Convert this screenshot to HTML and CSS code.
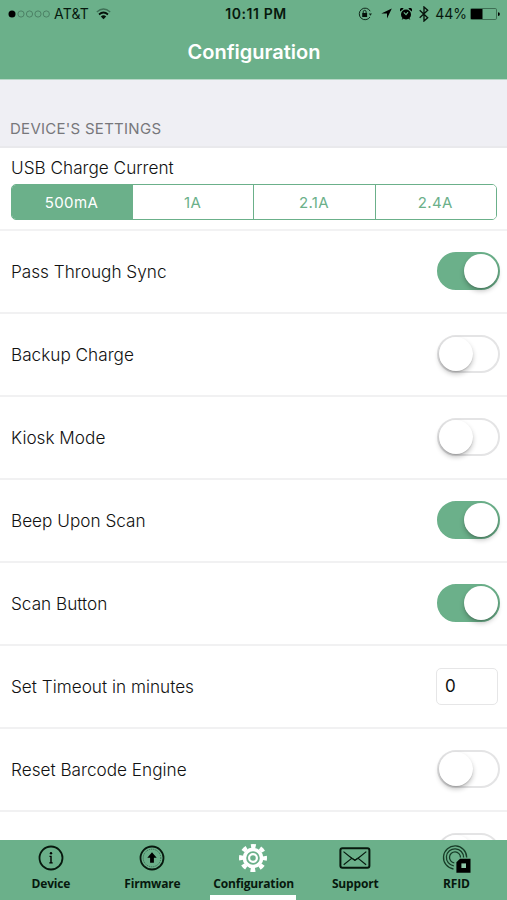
FILE: index.html
```html
<!DOCTYPE html>
<html lang="en">
<head>
<meta charset="utf-8">
<title>Configuration</title>
<link rel="stylesheet" href="styles.css">
</head>
<body>
<div class="app">
  <header class="header">
    <div class="status">
      <div class="status-left">
        <svg class="signal" width="42" height="10" viewBox="0 0 42 10"><circle cx="4" cy="5" r="3.5"/><g fill="none" stroke="#487c61" stroke-width=".9"><circle cx="13" cy="5" r="3.1"/><circle cx="21.5" cy="5" r="3.1"/><circle cx="30" cy="5" r="3.1"/><circle cx="38.3" cy="5" r="3.1"/></g></svg>
        <span class="carrier">AT&amp;T</span>
        <svg class="wifi" width="15" height="12" viewBox="0 0 15 12" fill="none"><path d="M.8 4.1Q7.5-2 14.2 4.1" stroke="#3f7056" stroke-width="1.3"/><path d="M3 6.5Q7.5 2.5 12 6.5" stroke="#07120b" stroke-width="1.7"/><path d="M4.8 8.4Q7.5 6.3 10.2 8.4L7.5 11.3Z" fill="#07120b"/></svg>
      </div>
      <span class="clock">10:11 PM</span>
      <div class="status-right">
        <svg width="14" height="14" viewBox="0 0 14 14" fill="none" stroke="#10291b"><path d="M12.2 4.2A5.8 5.8 0 1 0 12 10"/><path d="M10.8 6.5h3.2l-1.6 2.2Z" fill="#10291b" stroke="none"/><path d="M4.2 6h4.9v4H4.2Z" fill="#07120b" stroke="none"/><path d="M5.2 6V4.8a1.45 1.45 0 0 1 2.9 0V6"/></svg>
        <svg class="arrow" width="11" height="11" viewBox="0 0 11 11"><path d="M10.8.4 6 10.6V5.4H.3Z"/></svg>
        <svg class="alarm" width="12" height="12" viewBox="0 0 12 12"><circle cx="6" cy="6.5" r="5"/><path d="M.2 3.6A2.2 2.2 0 0 1 3.6.7ZM11.8 3.6A2.2 2.2 0 0 0 8.4.7ZM1.6 11.8l1.1-2 1.3 1ZM10.4 11.8l-1.1-2-1.3 1Z"/><path d="M3.8 4.4 6 6.7l2-2.6" fill="none" stroke="#6bb08a" stroke-width="1.1"/></svg>
        <svg class="bluetooth" width="10" height="16" viewBox="0 0 10 16" fill="none" stroke="#07120b" stroke-width="1.35"><path d="m.7 4.3 8 7.4L5 15V1l3.7 3.3-8 7.4"/></svg>
        <span class="percent">44%</span>
        <svg class="battery" width="30" height="12" viewBox="0 0 30 12"><rect x=".5" y=".5" width="26" height="11" rx="1.2" fill="none" stroke="#39684e" stroke-width=".9"/><path d="M1 1h11.5v10H1Z"/><path d="M28 4.2a1.9 1.9 0 0 1 0 3.8Z"/></svg>
      </div>
    </div>
    <h1 class="title">Configuration</h1>
  </header>
  <main class="content">
    <h2 class="section">DEVICE'S SETTINGS</h2>
    <section class="charge">
      <div class="label label-usb">USB Charge Current</div>
      <div class="segments"><button class="segment selected">500mA</button><button class="segment">1A</button><button class="segment">2.1A</button><button class="segment">2.4A</button></div>
    </section>
    <div class="row"><span class="label">Pass Through Sync</span><span class="switch on"><i class="knob"></i></span></div>
    <div class="row"><span class="label">Backup Charge</span><span class="switch"><i class="knob"></i></span></div>
    <div class="row"><span class="label">Kiosk Mode</span><span class="switch"><i class="knob"></i></span></div>
    <div class="row"><span class="label">Beep Upon Scan</span><span class="switch on"><i class="knob"></i></span></div>
    <div class="row"><span class="label">Scan Button</span><span class="switch on"><i class="knob"></i></span></div>
    <div class="row"><span class="label">Set Timeout in minutes</span><span class="field">0</span></div>
    <div class="row"><span class="label">Reset Barcode Engine</span><span class="switch"><i class="knob"></i></span></div>
    <div class="row"><span class="label"></span><span class="switch"><i class="knob"></i></span></div>
  </main>
  <nav class="tabs">
    <a class="tab"><svg width="30" height="30" viewBox="0 0 30 30"><circle cx="15" cy="15" r="11.5" fill="none" stroke="#07190e" stroke-width="1.8"/><circle cx="15" cy="10.2" r="1.2"/><path d="M13.5 12.7h2.2v6.6h1v1.2h-3.4v-1.2h1v-5.4h-.8Z"/></svg><span>Device</span></a>
    <a class="tab"><svg width="30" height="30" viewBox="0 0 30 30"><circle cx="15" cy="15" r="11.5" fill="none" stroke="#07190e" stroke-width="1.8"/><circle cx="15" cy="15" r="8.8" fill="none" stroke="#315f46" stroke-width="1" stroke-dasharray="1 1"/><path d="m15 9.2 4.7 5.5h-2.8v5h-3.8v-5h-2.8Z"/></svg><span>Firmware</span></a>
    <a class="tab active"><svg width="30" height="30" viewBox="0 0 30 30" fill="none" stroke="#fff"><circle cx="15" cy="15" r="8.6" stroke-width="3.6"/><circle cx="15" cy="15" r="12" stroke-width="4" stroke-dasharray="4.8 4.625" stroke-dashoffset="2.4"/><circle cx="15" cy="15" r="3.9" stroke-width="2.2"/></svg><span>Configuration</span></a>
    <a class="tab"><svg width="32" height="30" viewBox="0 0 32 30" fill="none" stroke="#07190e" stroke-width="2"><rect x="1.4" y="5.2" width="29" height="19.6" rx="2"/><path d="m4.5 8.6 8.5 6.8 2.9 1.8 2.9-1.8 8.5-6.8M4.7 21.8l7.6-6.2M27.1 21.8l-7.6-6.2" stroke-width="1.2"/><path d="m10.5 13 5.4 3.4 5.4-3.4-5.4 5Z" fill="#07190e" stroke="none"/></svg><span>Support</span></a>
    <a class="tab"><svg width="30" height="30" viewBox="0 0 30 30" fill="none" stroke="#173c27" stroke-width="1.3"><path d="M12.5 26A11.6 11.6 0 1 1 25.7 14.5M12.8 22.9a8.6 8.6 0 1 1 9.8-8.4M13.3 19.9a5.5 5.5 0 1 1 6.2-5.5"/><path d="M19 15.8h10.5v14H15.4V19.3Z" fill="#000" stroke="none"/><path d="M20.4 20.4h4.6v4.6h-4.6Z" fill="#8fc8a9" stroke="none"/></svg><span>RFID</span></a>
  </nav>
</div>
</body>
</html>
```
FILE: styles.css
```css
* { box-sizing: border-box; }
body { margin: 0; background: #fff; font-family: Inter, "Liberation Sans", sans-serif; }
.app { width: 507px; height: 900px; display: flex; flex-direction: column; overflow: hidden; }
.header { height: 80px; flex: none; background: #6bb08a; border-bottom: 1px solid #b9d8c8; }
.status { height: 27px; display: grid; grid-template-columns: 1fr auto 1fr; align-items: center; padding: 0 7px 0 8px; color: #07190e; }
.status-left, .status-right { display: flex; align-items: center; }
.status-right { justify-content: flex-end; }
.carrier { font-size: 14px; margin-left: 4px; letter-spacing: .2px; }
.wifi { margin-left: 7px; }
.clock { font-size: 14px; font-weight: 600; letter-spacing: .6px; padding-left: 4px; }
.arrow { margin-left: 9px; }
.alarm { margin-left: 8px; }
.bluetooth { margin-left: 7px; }
.percent { font-size: 14px; margin-left: 6px; }
.battery { margin-left: 3px; }
.title { margin: 0; height: 51px; line-height: 51px; padding-left: 1px; text-align: center; color: #fff; font-size: 20px; font-weight: 600; }
.content { flex: 1; min-height: 0; overflow: hidden; }
.section { margin: 0; height: 68px; padding: 39px 10px 0; background: #efeff4; border-bottom: 2px solid #e9e9ec; font-size: 15px; line-height: 20px; font-weight: 400; letter-spacing: .27px; color: #77777b; }
.charge { height: 83px; padding: 9px 10px 0 11px; border-bottom: 2px solid #f2f2f3; }
.label { font-size: 17.2px; line-height: 22px; font-weight: 300; letter-spacing: 0; color: #111; }
.label-usb { height: 27px; }
.segments { display: grid; grid-template-columns: 120px repeat(3, 1fr); height: 36px; border: 1.5px solid #6bb08a; border-radius: 5px; overflow: hidden; }
.segment { appearance: none; margin: 0; padding: 0 1px 0 0; border: 0; background: #fff; color: #6bb08a; font: 400 15px Inter, sans-serif; letter-spacing: .4px; }
.segment + .segment { border-left: 1px solid #6bb08a; }
.segment.selected { background: #6bb08a; color: #fff; }
.row { height: 83px; padding: 0 7px 0 11px; display: flex; align-items: center; justify-content: space-between; border-bottom: 2px solid #f1f1f2; }
.switch { width: 63px; height: 38px; margin-bottom: 1px; border: 2px solid #e4e4e5; border-radius: 19px; display: flex; align-items: center; }
.knob { width: 34px; height: 34px; border-radius: 50%; background: #fff; box-shadow: 0 3px 5px rgba(0,0,0,.24), 0 1px 1px rgba(0,0,0,.12); }
.switch.on { background: #6bb08a; border-color: #6bb08a; justify-content: flex-end; }
.field { width: 62px; height: 37px; margin-right: 2px; border: 1px solid #e6e6e7; border-radius: 5px; padding-left: 8px; font-size: 17px; line-height: 35px; color: #111; }
.tabs { height: 60px; flex: none; background: #6bb08a; display: grid; grid-template-columns: repeat(5, 1fr); }
.tab { display: flex; flex-direction: column; align-items: center; padding-top: 3px; color: #07190e; }
.tab span { font-family: "Open Sans", "Noto Sans", sans-serif; font-size: 13px; line-height: 16px; font-weight: 700; margin-top: 2px; white-space: nowrap; letter-spacing: -.2px; transform: scaleX(.925); }
.tab.active::after { content: ""; width: 86px; height: 5px; margin-top: 4px; background: #fff; }
```
